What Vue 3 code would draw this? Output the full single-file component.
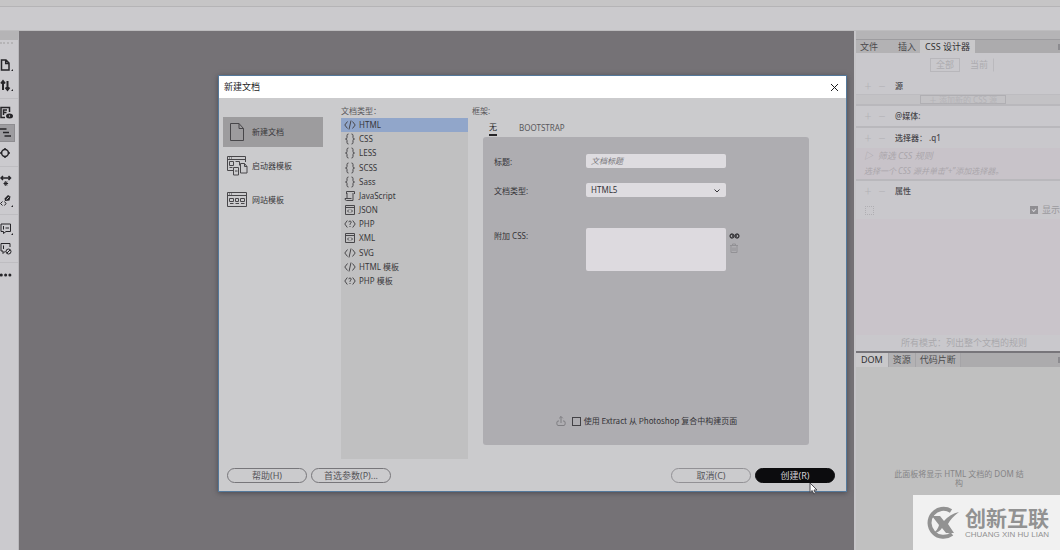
<script setup>
import { ref } from 'vue'

const groups = [
  [{ id: 'file', label: '打开文档', more: true }, { id: 'sync', label: '文件管理', more: true }],
  [{ id: 'live', label: '实时视图' }, { id: 'format', label: '格式化', on: true }, { id: 'inspect', label: '检查' }],
  [{ id: 'expand', label: '展开全部' }, { id: 'brush', label: '格式化源代码', more: true }],
  [{ id: 'comment', label: '应用注释', more: true }, { id: 'uncomment', label: '删除注释' }],
  [{ id: 'dots', label: '自定义工具栏' }]
]
const navs = [
  { id: 'new', text: '新建文档' },
  { id: 'starter', text: '启动器模板' },
  { id: 'site', text: '网站模板' }
]
const types = [
  ['code', 'HTML'], ['brace', 'CSS'], ['brace', 'LESS'], ['brace', 'SCSS'], ['brace', 'Sass'],
  ['script', 'JavaScript'], ['box', 'JSON'], ['php', 'PHP'], ['box', 'XML'], ['code', 'SVG'],
  ['code', 'HTML 模板'], ['php', 'PHP 模板']
]
const nav = ref('new')
const type = ref('HTML')
const title = ref('')
const doctype = ref('HTML5')
const extract = ref(false)
const shown = ref(true)
</script>

<template>
  <div class="app">
    <header class="topbar"><div class="menu-strip"></div></header>
    <div class="workspace">
      <aside class="tools">
        <div class="grip"></div>
        <div v-for="(g, i) in groups" :key="i" class="tool-group">
          <button v-for="t in g" :key="t.id" class="tool" :class="{ on: t.on }" :aria-label="t.label">
            <svg viewBox="0 0 14 16" width="14" height="16">
              <g v-if="t.id === 'file'" class="bold"><path d="M1.500 3H6l3 3v7H1.500zM5.700 3v3.400H9" /></g>
              <g v-else-if="t.id === 'sync'" class="heavy"><path d="M3 13V5M1 6.500L3 4l2 2.500M7.500 4v8M5.500 10.500l2 2.500 2-2.500" /></g>
              <g v-else-if="t.id === 'live'" class="bold"><path d="M9.500 7V2.500H1v10h4M3.500 10V5H7M3.500 7.500h3" /><ellipse cx="9.500" cy="11" rx="3.500" ry="2.500" class="fill" /><circle cx="9.500" cy="11" r=".7" class="hole" /></g>
              <g v-else-if="t.id === 'format'" class="bold"><path d="M0 4h6.500M3 7.500h6M4.500 11h6.500" /></g>
              <g v-else-if="t.id === 'inspect'" class="bold"><circle cx="5" cy="8" r="3.400" /><path d="M5 3v2M5 11v2M0 8h2M8 8h2" /></g>
              <g v-else-if="t.id === 'expand'" class="bold"><path d="M1 5h9M3 3L1 5l2 2M8.500 3l2 2-2 2" /><path class="thin" d="M5.800 8v5M3.500 10.500h4.600M4.200 9l3.200 3M7.400 9l-3.200 3" /></g>
              <g v-else-if="t.id === 'brush'"><path d="M2.500 8.500l-2 2 2 2M4.500 8.500l1.500 2-1.500 2" /><path class="fill" d="M5 8L4.500 5.500 8 2l2.500 1.500L9.500 7.500z" /><path class="glint" d="M6.500 6.500L9 3.800" /></g>
              <g v-else-if="t.id === 'comment'"><path d="M1 3h9.500v7.500H6l-2.500 2v-2H1zM3.500 5v3.500M5.500 7H9" /></g>
              <g v-else-if="t.id === 'uncomment'"><path d="M10 6V2.500H1V10h2v2.500L5.500 10M3.500 4.500V8" /><circle cx="8.500" cy="10.500" r="2.500" /><path d="M7 12l3-3" /></g>
              <g v-else class="fill"><circle cx="1.300" cy="8" r="1.500" /><circle cx="5.600" cy="8" r="1.500" /><circle cx="9.900" cy="8" r="1.500" /></g>
              <path v-if="t.more" class="fill" d="M13 12v2h-2z" />
            </svg>
          </button>
        </div>
      </aside>

      <main class="canvas"></main>

      <aside class="side">
        <section class="designer">
          <div class="tabs">
            <button>文件</button><button class="insert">插入</button><button class="active">CSS 设计器</button>
            <span class="tab-menu"></span>
          </div>
          <div class="mode"><button class="boxed">全部</button><button>当前</button></div>
          <div class="row"><i>＋</i><i>－</i><b>源</b></div>
          <div class="add"><button>＋ 添加新的 CSS 源</button></div>
          <div class="row line"><i>＋</i><i>－</i><b>@媒体:</b></div>
          <div class="row line"><i>＋</i><i>－</i><b>选择器： .q1</b></div>
          <div class="hint">
            <p>▷&nbsp; 筛选 CSS 规则</p>
            <p>选择一个 CSS 源并单击“+”添加选择器。</p>
          </div>
          <div class="row line"><i>＋</i><i>－</i><b>属性</b></div>
          <div class="show"><span class="ghost"></span><label><input v-model="shown" type="checkbox" /><span class="tick"></span>显示</label></div>
          <div class="blank"></div>
          <p class="all-mode">所有模式：列出整个文档的规则</p>
        </section>
        <section class="dom">
          <div class="tabs">
            <button class="active">DOM</button><button>资源</button><button class="snip">代码片断</button>
            <span class="tab-menu"></span>
          </div>
          <p>此面板将显示 HTML 文档的 DOM 结构</p>
        </section>
      </aside>
    </div>

    <div class="overlay">
      <section class="dialog" role="dialog" aria-labelledby="dlg-title">
        <div class="titlebar">
          <h1 id="dlg-title">新建文档</h1>
          <button aria-label="关闭"><svg viewBox="0 0 9 9" width="9" height="9"><path d="M1 1l7 7M8 1L1 8" /></svg></button>
        </div>
        <div class="content">
          <nav>
            <button v-for="n in navs" :key="n.id" :class="{ active: nav === n.id }" @click="nav = n.id">
              <svg viewBox="0 0 22 22" width="22" height="22">
                <path v-if="n.id === 'new'" d="M4.500 2.500H13l4.500 5v12h-13zM13 2.500v5h4.500" />
                <g v-else-if="n.id === 'starter'"><path d="M7 15.500H1.500v-14h18V7M1.500 4.500h18M3 3h1M5 3h1M3.500 6.500h4v4h-4zM9.500 6.500h4v4M3.500 12.500h3M7.500 12.500h5v7.500h-5zM9 16h2.500M14.500 8.500h4l2.500 3v6.500h-6.500zM18.500 8.500v3H21" /></g>
                <g v-else><path d="M1.500 3.500h19v14h-19zM1.500 6.500h19M3 5h1M5 5h1M3.500 9.500h4v3h-4zM9.500 9.500h3v3h-3zM14.500 9.500h4v3h-4zM4 14.500h3.500M9.500 14.500H13M15 14.500H18.500" /></g>
              </svg>
              {{ n.text }}
            </button>
          </nav>
          <div class="types">
            <h2>文档类型：</h2>
            <ul>
              <li v-for="t in types" :key="t[1]">
                <button :class="{ active: type === t[1] }" @click="type = t[1]">
                  <svg viewBox="0 0 12 12" width="12" height="12">
                    <path v-if="t[0] === 'code'" d="M3.500 2.500L.8 6l2.700 3.500M8.500 2.500L11.200 6 8.500 9.500M7 1.500L5 10.500" />
                    <path v-else-if="t[0] === 'brace'" d="M4.500 1Q3 1 3 2.500v2Q3 6 1.500 6 3 6 3 7.500v2Q3 11 4.500 11M7.500 1Q9 1 9 2.500v2Q9 6 10.500 6 9 6 9 7.500v2Q9 11 7.500 11" />
                    <path v-else-if="t[0] === 'script'" d="M2.500 4V1.500h8V4M3 3v6M9 3v7.500H2.500Q1 10.500 1 8.500h6.500" />
                    <path v-else-if="t[0] === 'box'" d="M1.500 1.500h9v9h-9zM1.500 3.500h9M5 5.500L3.500 7 5 8.500M7 5.500L8.500 7 7 8.500" />
                    <path v-else d="M3.300 2.500L.8 6l2.500 3.500M8.700 2.500L11.200 6 8.700 9.500M4.800 4.200Q4.900 3 6 3t1.200 1.200Q7.200 5 6 5.800v1M6 8v1" />
                  </svg>
                  {{ t[1] }}
                </button>
              </li>
            </ul>
          </div>
          <div class="framework">
            <h2>框架:</h2>
            <div class="fw-tabs"><button class="active">无</button><button>BOOTSTRAP</button></div>
            <form class="panel" @submit.prevent>
              <div class="field">
                <label for="f-title">标题:</label>
                <input id="f-title" v-model="title" type="text" placeholder="文档标题" />
              </div>
              <div class="field doctype">
                <label for="f-type">文档类型:</label>
                <div class="select">
                  <select id="f-type" v-model="doctype"><option>HTML5</option></select>
                  <svg viewBox="0 0 8 6" width="8" height="6"><path d="M1.500 1.500L4 4l2.500-2.500" /></svg>
                </div>
              </div>
              <div class="field css">
                <label for="f-css">附加 CSS:</label>
                <textarea id="f-css"></textarea>
                <div class="css-actions">
                  <button type="button" aria-label="附加样式表"><svg viewBox="0 0 11 8" width="11" height="8"><path class="link" d="M4.800 3A2 2 0 1 0 4.800 5M6.200 3a2 2 0 1 1 0 2M3 4h5" /></svg></button>
                  <button type="button" aria-label="删除" disabled><svg viewBox="0 0 10 10" width="10" height="10"><path d="M1 2.500h8M3.500 2.500V1h3v1.500M2 3v6.500h6V3M4 4.500V8M6 4.500V8" /></svg></button>
                </div>
              </div>
              <div class="extract">
                <svg viewBox="0 0 10 12" width="10" height="12"><path d="M5 8V1.500M3.200 3.300L5 1.500l1.800 1.800M3 6H2Q.8 6 .8 8.200T2 10.500h6Q9.200 10.500 9.200 8.200T8 6H7" /></svg>
                <label><input v-model="extract" type="checkbox" />使用 Extract 从 Photoshop 复合中构建页面</label>
              </div>
            </form>
          </div>
        </div>
        <footer>
          <button>帮助(H)</button>
          <button>首选参数(P)...</button>
          <span class="spacer"></span>
          <button class="cancel">取消(C)</button>
          <button class="primary">创建(R)
            <svg class="cursor" viewBox="0 0 9 13" width="9" height="13"><path d="M1 1v9.500l2.200-2L4.800 12l1.700-.8L5 8h3z" /></svg>
          </button>
        </footer>
      </section>
    </div>

    <div class="brand">
      <svg viewBox="0 0 36 34" width="36" height="34">
        <path class="ring" d="M27 5A14 14 0 1 0 28 28" />
        <path class="shape" d="M8 10h8l4 5q6-7 15-9-8 6-11 12l6 9h-8l-4-5q-3 5-9 5 5-3 6-8z" />
      </svg>
      <div><strong>创新互联</strong><small>CHUANG XIN HU LIAN</small></div>
    </div>
  </div>
</template>

<style>
body { margin: 0; overflow: hidden; }
</style>

<style scoped>
* { box-sizing: border-box; }
.app { position: relative; display: flex; flex-direction: column; height: 100vh; font: 8px/12px "Noto Sans", "Noto Sans CJK SC", sans-serif; color: #38373a; background: #757276; overflow: hidden; }
button { font: inherit; color: inherit; border: 0; padding: 0; margin: 0; background: none; white-space: nowrap; }
h1, h2, p, ul { margin: 0; padding: 0; font-size: inherit; font-weight: 400; list-style: none; }
svg { display: block; flex: none; fill: none; stroke: currentColor; stroke-width: 1; }

.topbar { height: 31px; flex: none; background: #cbcacd; border-bottom: 1px solid #bdbcbe; }
.menu-strip { height: 7px; background: #c6c5c6; border-bottom: 1px solid #b5b4b6; }
.workspace { flex: 1; display: flex; min-height: 0; }

.tools { width: 19px; flex: none; background: #cbcace; border-top: 9px solid #b5b4b6; border-right: 1px solid #b9b8bc; color: #262529; }
.grip { height: 11px; padding-top: 2px; }
.grip::before { content: ""; display: block; width: 13px; border-top: 2px dotted #b5b4b6; }
.tool-group { border-top: 1px solid #bebdc1; padding: 4px 0 3px; }
.grip + .tool-group { border-top-color: transparent; padding-top: 3px; }
.tool-group:last-child { padding-top: 2px; }
.tool { display: flex; align-items: center; width: 15px; height: 20px; }
.tool.on svg { background: #9d9ca0; outline: 1px solid #8e8d91; }
.bold { stroke-width: 1.500; }
.heavy { stroke-width: 2; }
.thin { stroke-width: 1; }
.fill { fill: currentColor; stroke: none; }
.hole { fill: #cbcace; stroke: none; }
.glint { stroke: #cbcace; }
.canvas { flex: 1; background: #757276; }

.side { width: 206px; flex: none; display: flex; flex-direction: column; border-left: 2px solid #c6c5c8; background: #c9c8cc; }
.designer { border-top: 8px solid #b5b4b6; height: 322px; display: flex; flex-direction: column; border-bottom: 2px solid #77757a; }
.tabs { display: flex; height: 14px; flex: none; background: #acabad; font-size: 9px; color: #4b4a4d; }
.tabs button { padding: 0 4px; line-height: 14px; background: #b3b2b4; }
.tabs .insert { padding-left: 16px; }
.tabs button.active { padding: 0 5px; background: #c9c8ca; color: #303032; }
.tab-menu { margin-left: auto; width: 2px; height: 6px; align-self: center; background: #8c8b8f; }
.designer .tabs { border-top: 1px solid #9d9c9f; }
.mode { display: flex; justify-content: center; align-items: center; height: 24px; flex: none; gap: 4px; padding-left: 8px; color: #adacb0; font-size: 9px; }
.mode button { padding: 0 5px; height: 14px; line-height: 12px; border: 1px solid transparent; border-right-color: #bab9bd; }
.mode .boxed { border-color: #b8b7bb; }
.row { display: flex; align-items: center; height: 17px; flex: none; padding-left: 8px; }
.row i { width: 14px; font-style: normal; color: #b2b1b5; }
.row b { font-weight: 500; padding-left: 3px; color: #4a494d; }
.row.line { border-top: 2px solid #b9b8bc; height: 22px; }
.add { height: 10px; flex: none; background: #c3c2c5; border-top: 1px solid #bdbcc0; }
.add button { display: block; width: 86px; margin-left: 64px; height: 9px; line-height: 7px; border: 1px solid #b0afb3; color: #b4b3b7; }
.hint { height: 31px; flex: none; padding: 0 8px; background: #c8c3c9; color: #aaa6ab; font-style: italic; white-space: nowrap; }
.hint p { line-height: 15px; }
.hint p:first-child { font-size: 9px; }
.show { height: 18px; flex: none; display: flex; justify-content: space-between; align-items: center; padding-left: 9px; color: #9b9a9e; }
.ghost { width: 9px; height: 9px; border: 1px dotted #b0afb3; }
.show label { display: flex; align-items: center; gap: 4px; font-size: 9px; width: 30px; white-space: nowrap; position: relative; }
.show input { appearance: none; margin: 0; width: 8px; height: 8px; flex: none; background: #8f8e92; }
.tick { position: absolute; left: 2px; top: 4px; width: 4px; height: 3px; border: solid #d4d3d7; border-width: 0 0 1px 1px; transform: rotate(-45deg); }
.blank { flex: 1; background: #c9c4ca; }
.all-mode { line-height: 16px; flex: none; text-align: center; color: #a9a8ac; font-size: 9px; padding-left: 12px; }
.dom { flex: 1; background: #c0c0c0; }
.dom p { color: #858486; text-align: center; line-height: 9px; padding: 102px 34px 0 36px; word-break: break-all; }
.dom .tabs button { border-right: 1px solid #a5a4a7; }

.overlay { position: absolute; inset: 0; padding: 75px 213px 58px 218px; display: flex; }
.dialog { flex: 1; min-width: 0; display: flex; flex-direction: column; background: #cbcbcd; border: 1px solid #54799b; box-shadow: 0 1px 5px #4b4a50; }
.titlebar { height: 22px; flex: none; display: flex; justify-content: space-between; align-items: center; background: #fff; padding: 0 7px 0 5px; color: #1d1d1f; }
.titlebar h1 { font-size: 9px; }
.content { flex: 1; display: flex; padding: 6px 37px 0 4px; min-height: 0; }
nav { width: 100px; flex: none; display: flex; flex-direction: column; gap: 4px; padding-top: 13px; }
nav button { display: flex; align-items: center; gap: 4px; height: 30px; padding-left: 3px; }
nav button.active { background: #9d9c9e; }
nav svg { stroke: #48474a; }
.types { width: 127px; flex: none; margin-left: 18px; display: flex; flex-direction: column; }
h2 { line-height: 14px; height: 14px; flex: none; color: #59585b; }
.types ul { flex: 1; background: #c0c0c1; display: grid; grid-template-rows: repeat(12, 1fr); padding-bottom: 171px; }
.types li { min-height: 0; display: flex; }
.types li button { flex: 1; display: flex; align-items: center; gap: 3px; padding-left: 3px; }
.types li button.active { background: #91a6ca; }
.types svg { stroke: #48474a; }
.framework { flex: 1; margin-left: 4px; display: flex; flex-direction: column; }
.fw-tabs { display: flex; gap: 22px; padding-left: 17px; height: 19px; }
.fw-tabs button { height: 18px; line-height: 17px; color: #59585b; }
.fw-tabs button.active { color: #252427; border-bottom: 2px solid #252427; }
.panel { flex: 1; margin: 0 0 14px 11px; background: #aeadb1; border-radius: 3px; padding: 17px 10px 18px 11px; display: flex; flex-direction: column; color: #343337; }
.field { display: flex; align-items: flex-start; }
.field label { width: 92px; flex: none; line-height: 15px; }
.field input, .field select, .field textarea { width: 140px; height: 14px; border: 0; border-radius: 2px; margin: 0; padding: 0 5px; font: inherit; line-height: 14px; color: #343337; background: #dedce0; outline: 0; appearance: none; display: block; }
.field input::placeholder { color: #77767a; font-style: italic; opacity: 1; }
.doctype { margin-top: 14px; }
.field.css { margin-top: 30px; }
.select { position: relative; }
.select svg { position: absolute; right: 5px; top: 5px; pointer-events: none; }
.field textarea { height: 43px; resize: none; background: #dddadf; }
.css-actions { padding: 4px 3px; display: flex; flex-direction: column; gap: 3px; }
.css-actions button:disabled { color: #929195; }
.link { stroke-width: 1.300; }
.extract { margin-top: auto; display: flex; justify-content: center; align-items: center; gap: 6px; font-family: "Noto Sans CJK SC", sans-serif; }
.extract > svg { color: #7f7e82; }
.extract label { display: flex; align-items: center; gap: 3px; }
.extract input { appearance: none; width: 9px; height: 9px; margin: 0; border: 1px solid #434246; }
footer { display: flex; gap: 4px; padding: 9px 11px 8px 8px; flex: none; font-size: 9px; }
.spacer { flex: 1; }
footer button { width: 80px; height: 15px; line-height: 13px; border: 1px solid #77767a; border-radius: 8px; color: #565559; position: relative; }
footer .cancel { border-color: #929195; }
footer .primary { background: #0c0c0e; border-color: #0c0c0e; color: #d6d5d9; }
.cursor { position: absolute; left: 53px; top: 13px; fill: #fff; stroke: #4c4b50; }

.brand { position: absolute; right: 0; bottom: 0; width: 147px; height: 55px; background: #f1f1f1; display: flex; align-items: center; gap: 5px; padding-left: 11px; color: #929292; white-space: nowrap; }
.ring { stroke-width: 4; }
.shape { fill: currentColor; stroke: none; }
.brand strong { display: block; font: 700 21px/21px "Noto Sans CJK SC", sans-serif; }
.brand small { display: block; font: 8px/9px "Liberation Sans", sans-serif; margin-top: 2px; }
</style>
